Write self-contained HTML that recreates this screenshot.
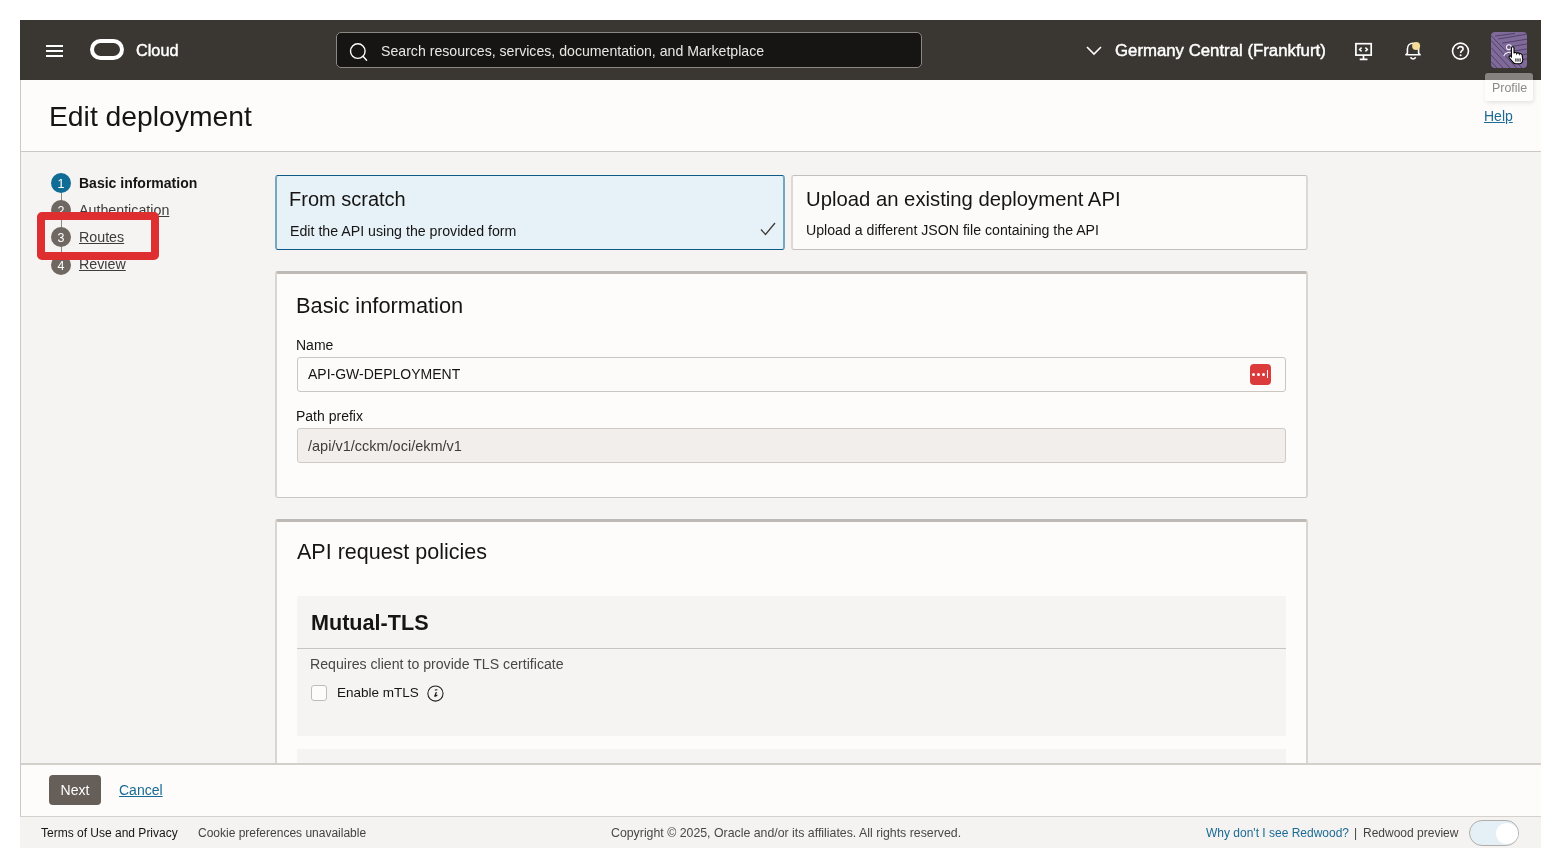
<!DOCTYPE html>
<html><head><meta charset="utf-8">
<style>
*{box-sizing:border-box;margin:0;padding:0}
html,body{width:1560px;height:868px;overflow:hidden;background:#ffffff}
body{position:relative;font-family:"Liberation Sans",sans-serif;color:#161513;-webkit-font-smoothing:antialiased}
.a{position:absolute}
.t{position:absolute;line-height:1;white-space:nowrap;will-change:transform}
</style></head><body>

<!-- header -->
<div class="a" style="left:20px;top:20px;width:1521px;height:60px;background:#3a3632"></div>
<!-- hamburger -->
<div class="a" style="left:46px;top:45px;width:17px;height:2px;background:#fff"></div>
<div class="a" style="left:46px;top:50px;width:17px;height:2px;background:#fff"></div>
<div class="a" style="left:46px;top:55px;width:17px;height:2px;background:#fff"></div>
<!-- logo -->
<div class="a" style="left:90px;top:39px;width:34px;height:21px;border:4px solid #fff;border-radius:11px"></div>
<div class="t" style="left:135.5px;top:42px;font-size:16.3px;-webkit-text-stroke:0.45px #fff;color:#fff">Cloud</div>
<!-- search -->
<div class="a" style="left:336px;top:32px;width:586px;height:36px;border:1px solid #8c8782;border-radius:5px;background:#161513"></div>
<svg class="a" style="left:348px;top:41px" width="22" height="22" viewBox="0 0 22 22"><circle cx="9.8" cy="10.1" r="7.3" fill="none" stroke="#fff" stroke-width="1.4"/><path d="M15 15.3L18.6 19.2" stroke="#fff" stroke-width="1.4" stroke-linecap="round"/></svg>
<div class="t" style="left:381px;top:44px;font-size:14.13px;color:#e9e7e4">Search resources, services, documentation, and Marketplace</div>
<!-- region -->
<svg class="a" style="left:1085px;top:44px" width="18" height="14" viewBox="0 0 18 14"><path d="M2 3L9 10L16 3" fill="none" stroke="#fff" stroke-width="1.6"/></svg>
<div class="t" style="left:1114.5px;top:42.8px;font-size:16.8px;-webkit-text-stroke:0.45px #fff;color:#fff">Germany Central (Frankfurt)</div>
<!-- monitor icon -->
<svg class="a" style="left:1353px;top:41px" width="22" height="22" viewBox="0 0 22 22">
<rect x="2.9" y="2.7" width="15.3" height="11.4" fill="none" stroke="#fff" stroke-width="1.7"/>
<path d="M10.5 14v4M6.7 18.4h7.8" stroke="#fff" stroke-width="1.7"/>
<path d="M8.6 6.6L6.6 8.5L8.6 10.4M12.4 6.6L14.4 8.5L12.4 10.4" fill="none" stroke="#fff" stroke-width="1.5"/>
</svg>
<!-- bell -->
<svg class="a" style="left:1402px;top:40px" width="22" height="22" viewBox="0 0 22 22">
<path d="M3.9 14.8L5.4 13.2L5.4 9C5.4 5.5 7.9 3.2 11 3.2C14.1 3.2 16.6 5.5 16.6 9L16.6 13.2L18.1 14.8Z" fill="none" stroke="#fff" stroke-width="1.6" stroke-linejoin="round"/>
<path d="M8.4 17.3Q11.1 20.6 13.8 17.3" fill="none" stroke="#fff" stroke-width="1.6"/>
<circle cx="14.1" cy="6" r="4" fill="#f2dc98"/>
</svg>
<!-- help -->
<svg class="a" style="left:1449px;top:40px" width="23" height="23" viewBox="0 0 23 23">
<circle cx="11.5" cy="11.1" r="8" fill="none" stroke="#fff" stroke-width="1.6"/>
<path d="M8.9 9.1C8.9 7.5 10 6.6 11.5 6.6C13 6.6 14.1 7.5 14.1 8.9C14.1 10.6 11.6 10.8 11.6 12.9" fill="none" stroke="#fff" stroke-width="1.6"/>
<circle cx="11.6" cy="15.3" r="1" fill="#fff"/>
</svg>
<!-- avatar -->
<div class="a" style="left:1491px;top:32px;width:36px;height:36px;border-radius:4px;background:#7f6a9a;overflow:hidden">
<svg width="36" height="36" viewBox="0 0 36 36"><g stroke="#52426a" stroke-width="1" fill="none"><path d="M0 3.6L32 37M0 8.5L27 37.5M0 15.5L20 37M0 23L13 37M0 29.5L7 37"/><path d="M4.06 4.06L24 1.4M7.03 7.03L38 1.8M11.20 11.20L38 6.8M15.37 15.37L38 11.6M19.68 19.68L38 16.6M24.00 24.00L38 21.6M28.17 28.17L38 26.6"/></g>
<circle cx="17.9" cy="15.2" r="2.4" fill="none" stroke="#f4f0f8" stroke-width="1.1"/>
<path d="M12.8 24.2C13.6 21.4 16.8 20 20.8 20.3" fill="none" stroke="#f4f0f8" stroke-width="1.1"/>
<path d="M20.4 16C20.4 14.4 23 14.4 23 16L23 21.2C23.4 20.2 25.5 20.2 25.7 21.5C26.1 20.6 28.2 20.6 28.4 22.1C28.8 21.4 30.9 21.4 31.1 23.1L31.8 27.6C31.8 29.8 30.5 31.6 28.8 31.8L24.6 31.8C23.5 31.8 22.7 31.1 21.9 30.1L18.3 25.8C17.4 24.7 18.7 23.3 19.8 24.2L20.4 24.8Z" fill="#fff" stroke="#000" stroke-width="1.1"/>
<path d="M24.9 26.4V29.6M27.0 26.4V29.6M29.1 26.4V29.6" stroke="#000" stroke-width="1"/>
</svg></div>
<!-- title area -->
<div class="a" style="left:20px;top:80px;width:1521px;height:72px;background:#fdfcfb;border-left:1px solid #cdc8c3;border-bottom:1px solid #cdc8c3"></div>
<div class="t" style="left:48.8px;top:101.8px;font-size:28.3px;color:#161513">Edit deployment</div>
<div class="t" style="left:1484px;top:108.7px;font-size:14px;color:#1c6b94;text-decoration:underline">Help</div>

<!-- tooltip -->
<div class="a" style="left:1484.5px;top:73px;width:48.5px;height:27.5px;background:rgba(255,255,255,0.38);border-radius:3px;box-shadow:1px 2px 4px rgba(0,0,0,0.10)"></div>
<div class="t" style="left:1491.8px;top:81.5px;font-size:12.4px;color:#8c8a88">Profile</div>

<!-- content -->
<div class="a" style="left:20px;top:152px;width:1521px;height:611px;background:#f5f4f2;border-left:1px solid #cdc8c3"></div>

<!-- steps -->
<div class="a" style="left:60.5px;top:193px;width:1px;height:62px;background:#8e8781"></div>
<div class="a" style="left:51px;top:173px;width:20px;height:20px;border-radius:50%;background:#106b95"></div>
<div class="a" style="left:51px;top:200px;width:20px;height:20px;border-radius:50%;background:#6f6862"></div>
<div class="a" style="left:51px;top:227px;width:20px;height:20px;border-radius:50%;background:#6f6862"></div>
<div class="a" style="left:51px;top:254.5px;width:20px;height:20px;border-radius:50%;background:#6f6862"></div>
<div class="t" style="left:51px;width:20px;text-align:center;top:178px;font-size:12.5px;color:#fff">1</div>
<div class="t" style="left:51px;width:20px;text-align:center;top:205px;font-size:12.5px;color:#fff">2</div>
<div class="t" style="left:51px;width:20px;text-align:center;top:232px;font-size:12.5px;color:#fff">3</div>
<div class="t" style="left:51px;width:20px;text-align:center;top:259.5px;font-size:12.5px;color:#fff">4</div>
<div class="t" style="left:79.4px;top:175.85px;font-size:14px;font-weight:bold;color:#161513">Basic information</div>
<div class="t" style="left:79.4px;top:203.15px;font-size:14.25px;color:#3f3b38;text-decoration:underline">Authentication</div>
<div class="t" style="left:79.4px;top:230.15px;font-size:14.25px;color:#3f3b38;text-decoration:underline">Routes</div>
<div class="t" style="left:79.4px;top:257.35px;font-size:14.25px;color:#3f3b38;text-decoration:underline">Review</div>
<!-- red highlight -->
<div class="a" style="left:37px;top:212px;width:122px;height:48px;border:8px solid #df2e2f;border-radius:5px"></div>

<!-- choice cards -->
<div class="a" style="left:275px;top:175px;width:510px;height:75px;background:#e7f2f8;border:1px solid #105b86;border-left:2px solid #74a8c1;border-right:2px solid #74a8c1;border-radius:3px"></div>
<div class="t" style="left:289.3px;top:188.8px;font-size:20px;color:#161513">From scratch</div>
<div class="t" style="left:289.8px;top:223.5px;font-size:14.2px;color:#161513">Edit the API using the provided form</div>
<svg class="a" style="left:758px;top:220px" width="20" height="18" viewBox="0 0 20 18"><path d="M3 9.5L7.5 14.5L17 3" fill="none" stroke="#3f3b38" stroke-width="1.3"/></svg>
<div class="a" style="left:791px;top:175px;width:517px;height:75px;background:#fcfbfa;border:1px solid #c4bfba;border-left:2px solid #dcd8d4;border-right:2px solid #dcd8d4;border-bottom:1px solid #c4bfba;border-radius:3px"></div>
<div class="t" style="left:806.1px;top:189px;font-size:20.3px;color:#161513">Upload an existing deployment API</div>
<div class="t" style="left:806.3px;top:223.3px;font-size:14.15px;color:#161513">Upload a different JSON file containing the API</div>

<!-- basic info card -->
<div class="a" style="left:275px;top:271px;width:1033px;height:227px;background:#fdfcfb;border:1px solid #cbc6c1;border-left:2px solid #d9d5d1;border-right:2px solid #d9d5d1;border-top:3px solid #bfbab5;border-radius:3px"></div>
<div class="t" style="left:295.9px;top:294.6px;font-size:21.8px;color:#161513">Basic information</div>
<div class="t" style="left:295.6px;top:337.85px;font-size:14px;color:#161513">Name</div>
<div class="a" style="left:297px;top:357px;width:989px;height:35px;background:#fcfbfa;border:1px solid #cbc6c1;border-radius:3px"></div>
<div class="t" style="left:307.8px;top:367.35px;font-size:14px;color:#161513">API-GW-DEPLOYMENT</div>
<div class="a" style="left:1250px;top:364px;width:21px;height:21px;background:#dc3b3b;border-radius:4px"></div>
<div class="a" style="left:1252.2px;top:372.6px;width:3px;height:3px;border-radius:50%;background:#fff"></div>
<div class="a" style="left:1257.2px;top:372.6px;width:3px;height:3px;border-radius:50%;background:#fff"></div>
<div class="a" style="left:1262.2px;top:372.6px;width:3px;height:3px;border-radius:50%;background:#fff"></div>
<div class="a" style="left:1267px;top:370px;width:1.3px;height:8px;background:#fff"></div>
<div class="t" style="left:295.6px;top:409.25px;font-size:14px;color:#161513">Path prefix</div>
<div class="a" style="left:297px;top:428px;width:989px;height:35px;background:#f1eeec;border:1px solid #cfcac5;border-radius:3px"></div>
<div class="t" style="left:307.8px;top:438.6px;font-size:14.5px;color:#3f3b38">/api/v1/cckm/oci/ekm/v1</div>

<!-- api request policies card -->
<div class="a" style="left:275px;top:519px;width:1033px;height:260px;background:#fdfcfb;border:1px solid #cbc6c1;border-left:2px solid #d9d5d1;border-right:2px solid #d9d5d1;border-top:3px solid #bfbab5;border-radius:3px"></div>
<div class="t" style="left:296.7px;top:541.8px;font-size:21.5px;color:#161513">API request policies</div>
<div class="a" style="left:297px;top:596px;width:989px;height:140px;background:#f5f4f2;border-radius:2px"></div>
<div class="a" style="left:297px;top:647.5px;width:989px;height:1px;background:#c9c4bf"></div>
<div class="t" style="left:311px;top:611.6px;font-size:21.6px;font-weight:bold;color:#161513">Mutual-TLS</div>
<div class="t" style="left:309.6px;top:657.35px;font-size:14.15px;color:#4a4643">Requires client to provide TLS certificate</div>
<div class="a" style="left:311px;top:684.5px;width:16px;height:16px;background:#fdfcfb;border:1.3px solid #c2bcb6;border-radius:3px"></div>
<div class="t" style="left:337.4px;top:686.3px;font-size:13.5px;color:#161513">Enable mTLS</div>
<svg class="a" style="left:426px;top:684.3px" width="19" height="19" viewBox="0 0 19 19"><circle cx="9.45" cy="9.5" r="7.6" fill="none" stroke="#1f1d1b" stroke-width="1.05"/><path d="M9.2 5.95L11 5.75" stroke="#161513" stroke-width="1.1" stroke-linecap="round"/><path d="M10.2 8.5L8.8 12.1Q9.7 12.5 11 11.2" fill="none" stroke="#161513" stroke-width="1.2" stroke-linecap="round" stroke-linejoin="round"/></svg>
<div class="a" style="left:297px;top:749px;width:989px;height:40px;background:#f5f4f2"></div>

<!-- action bar -->
<div class="a" style="left:20px;top:763px;width:1521px;height:54px;background:#fdfcfb;border-left:1px solid #cdc8c3;border-top:2px solid #d3cfca;border-bottom:1px solid #d5d1cc"></div>
<div class="a" style="left:49px;top:775px;width:52px;height:30px;background:#665e58;border-radius:4px"></div>
<div class="t" style="left:49px;width:52px;text-align:center;top:783px;font-size:14px;color:#fff">Next</div>
<div class="t" style="left:118.5px;top:783px;font-size:14px;color:#166a94;text-decoration:underline">Cancel</div>

<!-- footer -->
<div class="a" style="left:20px;top:817px;width:1521px;height:31px;background:#f4f3f1"></div>
<div class="t" style="left:40.8px;top:827.2px;font-size:12px;color:#161513">Terms of Use and Privacy</div>
<div class="t" style="left:197.8px;top:827.2px;font-size:12px;color:#46423f">Cookie preferences unavailable</div>
<div class="t" style="left:611.2px;top:827.2px;font-size:12.33px;color:#4b4744">Copyright © 2025, Oracle and/or its affiliates. All rights reserved.</div>
<div class="t" style="left:1205.6px;top:827.2px;font-size:12px;color:#1a6a94">Why don't I see Redwood?</div>
<div class="t" style="left:1354px;top:827.2px;font-size:12px;color:#46423f">|</div>
<div class="t" style="left:1363px;top:827.2px;font-size:12px;color:#46423f">Redwood preview</div>
<div class="a" style="left:1468.5px;top:820px;width:50px;height:26px;border-radius:13px;background:#e4f0f6;border:1px solid #b3ada8"></div>
<div class="a" style="left:1495.5px;top:822.6px;width:22px;height:21.5px;border-radius:50%;background:#fff"></div>

</body></html>
